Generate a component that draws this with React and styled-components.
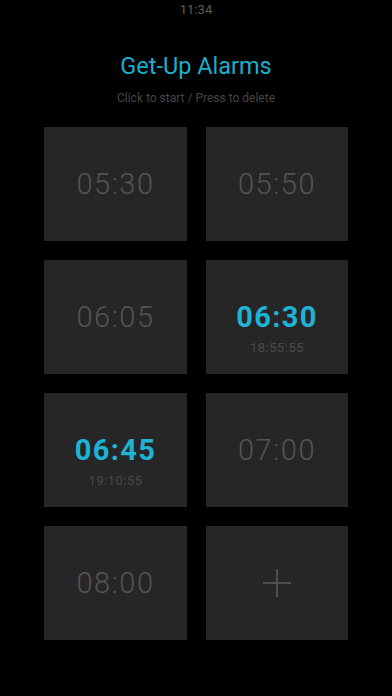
import React from "react";
import styled, { createGlobalStyle } from "styled-components";

const alarms = [
  { time: "05:30" },
  { time: "05:50" },
  { time: "06:05" },
  { time: "06:30", until: "18:55:55" },
  { time: "06:45", until: "19:10:55" },
  { time: "07:00" },
  { time: "08:00" },
];

function App() {
  return (
    <>
      <GlobalStyle />
      <Screen>
        <StatusBar>11:34</StatusBar>
        <Title>Get-Up Alarms</Title>
        <Hint>Click to start / Press to delete</Hint>
        <Grid>
          {alarms.map((a) => (
            <Tile key={a.time}>
              <Time active={!!a.until}>{a.time}</Time>
              {a.until && <Countdown>{a.until}</Countdown>}
            </Tile>
          ))}
          <Tile>
            <svg width="30" height="30" viewBox="0 0 30 30">
              <path d="M15 1v28M1 15h28" stroke="#4f4f4f" strokeWidth="2" />
            </svg>
          </Tile>
        </Grid>
      </Screen>
    </>
  );
}

const GlobalStyle = createGlobalStyle`
  body {
    margin: 0;
    background: #000;
    font-family: Roboto, "Liberation Sans", sans-serif;
  }
`;

const Screen = styled.div`
  width: 392px;
  height: 696px;
  background: #000;
  display: flex;
  flex-direction: column;
  align-items: center;
`;

const StatusBar = styled.div`
  height: 20px;
  line-height: 20px;
  font-size: 13px;
  color: #5c5c5c;
`;

const Title = styled.h1`
  margin: 33px 0 0;
  font-size: 23.5px;
  font-weight: 400;
  line-height: 26px;
  color: #1eaecd;
`;

const Hint = styled.div`
  margin-top: 13px;
  font-size: 12px;
  line-height: 13px;
  color: #464646;
`;

const Grid = styled.div`
  margin-top: 22px;
  display: grid;
  grid-template-columns: 143px 142px;
  grid-auto-rows: 114px;
  column-gap: 19px;
  row-gap: 19px;
`;

const Tile = styled.div`
  background: #262626;
  display: flex;
  flex-direction: column;
  align-items: center;
  justify-content: center;
`;

const Time = styled.div`
  font-size: 29px;
  line-height: 32px;
  font-weight: ${(p) => (p.active ? 700 : 300)};
  letter-spacing: ${(p) => (p.active ? "1.4px" : "1.5px")};
  color: ${(p) => (p.active ? "#1eb3d4" : "#545454")};
`;

const Countdown = styled.div`
  margin-top: 8px;
  margin-bottom: -22px;
  font-size: 13px;
  line-height: 14px;
  letter-spacing: 0.5px;
  color: #4a4a4a;
`;

export default App;
